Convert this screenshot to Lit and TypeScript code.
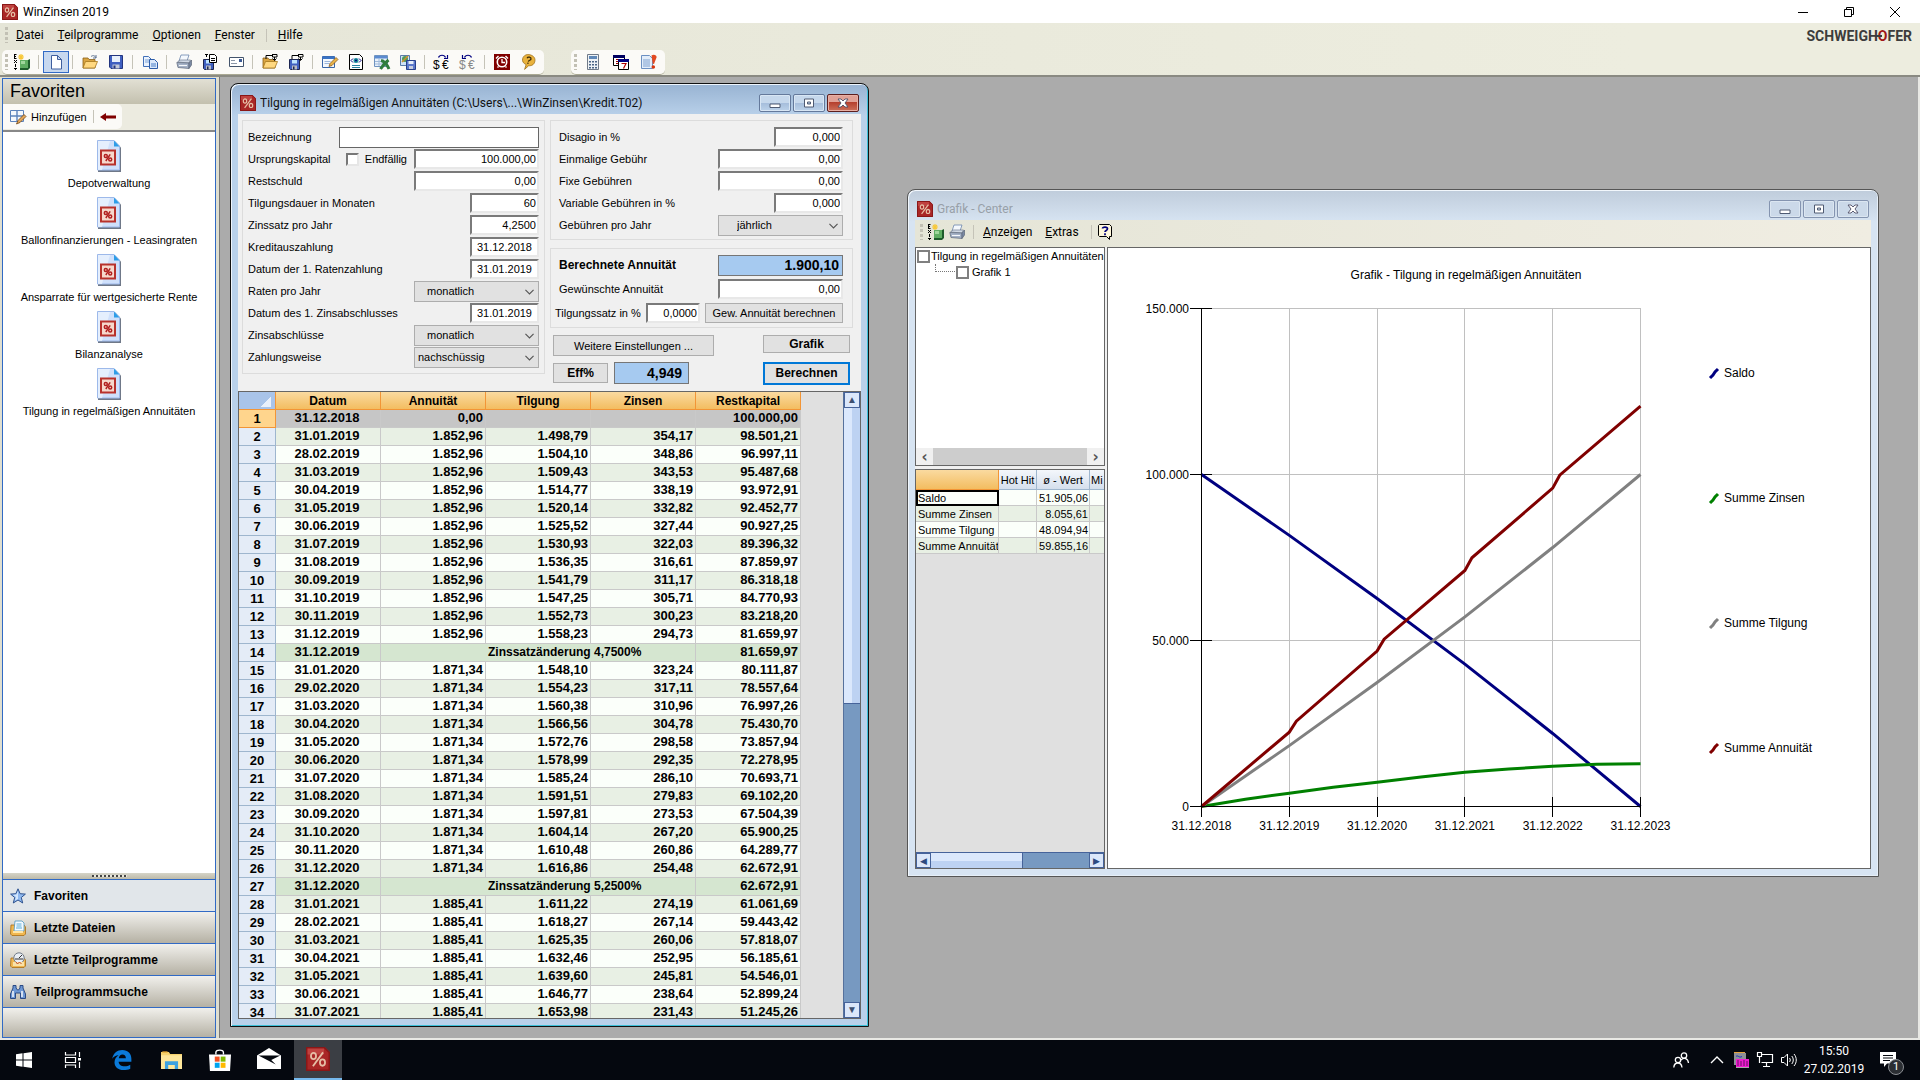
import { LitElement, html, svg, css, nothing, type TemplateResult } from "lit";
import { customElement } from "lit/decorators.js";
import { classMap } from "lit/directives/class-map.js";

/* ---------- icons (16x16 grid) ---------- */

const percent = svg`<g fill="none" stroke="#e6bfa6" stroke-width="1.200"><ellipse cx="5" cy="6" rx="1.700" ry="2.100"/><ellipse cx="11" cy="10.400" rx="1.700" ry="2.100"/><path d="M11.400 3.600 4.600 12.800"/></g>`;

const page = svg`<path d="M3.500 1.500h6l4 4v9.500h-10z" fill="#fff" stroke="#3f5f9e"/><path d="M9.500 1.500v4h4z" fill="#c5d8f2" stroke="#3f5f9e"/>`;
const folder = svg`<path d="M1 4h5l1 1.500h6V14H1z" fill="#d9a441" stroke="#8a6116" stroke-width=".8"/><path d="M3.500 7.500h12L12.800 14H1z" fill="#ffd880" stroke="#a5761c" stroke-width=".8"/>`;
const floppy = svg`<path d="M1.500 1.500h13v13h-11.500l-1.500-1.500z" fill="#3f5fc0" stroke="#23357f"/><path d="M4 2h8v6H4z" fill="#e8f0fb"/><path d="M4.500 10.500h7v4h-7z" fill="#c3c9d6"/><path d="M5.500 11.500h2v3h-2z" fill="#23357f"/>`;
const floppySmall = svg`<path d="M1.500 5.500h10v10h-9l-1-1z" fill="#3f5fc0" stroke="#1d2650"/><path d="M4 6h5v3.500H4z" fill="#bfe4ff"/><path d="M4 11.500h5v4H4z" fill="#b9bcc4"/><path d="M5 12.500h1.500v3H5z" fill="#1d2650"/>`;
const arrowOver = svg`<path d="M4 5V1.500h6M10.500 0v3h4.500V.5h-4.500M12.500 3v3M10.500 4.500l2 2 2-2" fill="none" stroke="#000"/>`;

const ICONS: Record<string, TemplateResult> = {
  app: svg`<path d="M0 0h12.500L16 3.500V16H0z" fill="#a92626"/><path d="M.5.5h11.800l3.200 3.200V15.500H.5z" fill="none" stroke="#8a1717"/><path d="M1 1h11v4H1z" fill="#cf5550" opacity=".6"/>${percent}`,
  exit: svg`<path d="M6 6h8l2-1v9l-2 2H6z" fill="#1e5d2b"/><path d="M6 6h8v8H6z" fill="#5fae62"/><path d="M7 7h4v3H7z" fill="#9fd79b"/><path d="M0 .5h2.500M0 2.500h2M0 4.500h2.500M.5 0v5M0 6.500h1M2 6.500h1M1 7.500h1M0 8.500h1M2 8.500h1M1.500 10v3M0 14.500h3M1.500 14v2" stroke="#000" fill="none"/><path d="M7 0v6M4 3h6M5 1l4 4M9 1 5 5" stroke="#f7c83a" stroke-width="1.200"/>`,
  page,
  folder: svg`${folder}<path d="M9 2.500c2-1.500 4-1 5 1.500m0-3v3h-3" fill="none" stroke="#5d7190"/>`,
  floppy,
  copy: svg`<path d="M1.500 2.500h5l3 3v7h-8z" fill="#eaf2fd" stroke="#4270b8"/><path d="M3 6h4M3 8h4" stroke="#7da3d8"/><path d="M7.500 5.500h5l3 3v6h-8z" fill="#dbe9fb" stroke="#2d5ca8"/><path d="M9 10h5M9 12h5" stroke="#4d80c8"/>`,
  print: svg`<path d="M5 1h8l-2 6H3z" fill="#f4f8fd" stroke="#6d87ad" stroke-width=".8"/><path d="M1.500 8 4 6h10.500L13 9z" fill="#d2dae6" stroke="#707c90" stroke-width=".7"/><path d="M.8 8.500 13 9v5.500L2 13.500z" fill="#a5b2c7" stroke="#5b6678" stroke-width=".7"/><path d="M13 9l2.500-3v5L13 14.500z" fill="#7a89a4" stroke="#5b6678" stroke-width=".7"/><path d="M3 11.500h8" stroke="#f6f8fb"/>`,
  saveDoc: svg`${floppySmall}<path d="M7.500.5h5l2 2v6h-7z" fill="#fff" stroke="#000"/><path d="M3 .5h3M4.500 0v3M9 4.500h4M9 6.500h4" stroke="#000"/>`,
  mail: svg`<path d="M1.500 3.500h14v9h-14z" fill="#fff" stroke="#44546c"/><path d="M3 6.500h4M3 9.500h6" stroke="#8c97a8"/><path d="M11 5h3v3h-3z" fill="#3d5a94"/>`,
  folderOut: svg`${folder}${arrowOver}`,
  saveOut: svg`${floppySmall}${arrowOver}`,
  edit: svg`<path d="M.5 2.500h12v11H.5z" fill="#f4f8fd" stroke="#3a66a8"/><path d="M.5 2.500h12v2.500H.5z" fill="#3a73c4"/><path d="M2.500 7.500h6M2.500 9.500h5" stroke="#9bb6dc"/><path d="M7 12.500 8 9.500l6-6 2 2-6 6z" fill="#e9b44a" stroke="#7b4c12" stroke-width=".7"/>`,
  web: svg`<path d="M1.500.5h10l3 3v12h-13z" fill="#fff" stroke="#000"/><circle cx="8" cy="6.500" r="2.500" fill="#1e8f9c"/><circle cx="8" cy="6.500" r="1" fill="#00007a"/><path d="M5 4.500l-2 2 2 2M11 4.500l2 2-2 2" fill="none" stroke="#00007a"/><path d="M4 11.500h8M4 13.500h8" stroke="#2780a0"/>`,
  excel: svg`<path d="M.5 1.500h13v11H.5z" fill="#e8f1fb" stroke="#6f93c0"/><path d="M1 2h12v2.500H1z" fill="#5b8bd0"/><path d="M1 7.500h12M1 10h12M5 4v8M9 4v8" stroke="#9fb9da"/><path d="M7 6.500c4 1 6 4 8 8.500M14.500 6C12 8 9 11 6.500 15" fill="none" stroke="#2e7d3d" stroke-width="3"/>`,
  picSave: svg`<path d="M.5 1.500h9v10h-9z" fill="#cfe3f7" stroke="#5b7ba8"/><circle cx="5" cy="5" r="3" fill="#4f9a5a"/><path d="M2 8l6-6" stroke="#d08c2a" stroke-width="1.500"/><path d="M6.500 6.500h9v9h-9z" fill="#5b78cc" stroke="#27408c"/><path d="M8.500 7h5v3h-5z" fill="#e6eefa"/><path d="M9 12h4v3H9z" fill="#c8cede"/>`,
  euro: svg`<text x="-1" y="15" font-size="12" font-family="Liberation Sans">$</text><text x="8" y="15" font-size="12" font-family="Liberation Sans">€</text><path d="M4.500 3.500c1-3 6-3 7 0m2-2.500v3.500h-3.500" fill="none" stroke="#000080" stroke-width="1.200"/>`,
  euroBack: svg`<text x="-1" y="15" font-size="12" fill="#888" font-family="Liberation Sans">$</text><text x="8" y="15" font-size="12" fill="#888" font-family="Liberation Sans">€</text><path d="M11.500 3.500c-1-3-6-3-7 0m-2-2.500v3.500h3.500" fill="none" stroke="#000080" stroke-width="1.200"/>`,
  alarm: svg`<path d="M0 0h16v16H0z" fill="#800000"/><circle cx="8" cy="8" r="4.700" fill="none" stroke="#fff" stroke-width="1.600"/><path d="M8 5v3.500h3" fill="none" stroke="#fff" stroke-width="1.300"/><path d="M2 4.500 4.500 2M14 4.500 11.500 2M3.500 13.500l1-1M12.500 13.500l-1-1" stroke="#fff" stroke-width="1.400"/>`,
  help: svg`<g transform="rotate(14 8 8)"><path d="M8 .5c4 0 6.500 2 6.500 5.500S12 11 9.500 11.500L6.500 16l.3-5C3.500 10.500 2 8.500 2 6 2 3 4.500.5 8 .5z" fill="#e9b23c" stroke="#9a6a14" stroke-width=".7"/><path d="M6.200 4.500c.3-2 4-2 4 0 0 1.500-2 1.300-2 3M8.200 8.500v1.300" fill="none" stroke="#3b2a08" stroke-width="1.300"/></g>`,
  calc: svg`<path d="M2.500.5h11v15h-11z" fill="#eef2f6" stroke="#707a88"/><path d="M4 2h8v3H4z" fill="#5f88b8"/><path d="M4 7h2v1.500H4zM7 7h2v1.500H7zM10 7h2v1.500h-2zM4 10h2v1.500H4zM7 10h2v1.500H7zM10 10h2v1.500h-2zM4 13h2v1.500H4zM7 13h2v1.500H7zM10 13h2v1.500h-2z" fill="#4a6486"/>`,
  calendar: svg`<path d="M.5 1.500h11v10H.5z" fill="#fff" stroke="#000"/><path d="M0 1h12v3H0z" fill="#000060"/><path d="M3 5.500h3v4H3M3 7.500h3" fill="none" stroke="#900"/><path d="M5.500 5.500h10v10h-10z" fill="#fff" stroke="#000"/><path d="M5 5h11v3H5z" fill="#000080"/><path d="M8.500 9.500h4.500L10.500 14.500" fill="none" stroke="#b00000" stroke-width="1.200"/>`,
  note: svg`<path d="M.5 1.500h8l3 3v10H.5z" fill="#e2edfa" stroke="#6c90c2"/><path d="M2 6h7M2 8h7M2 10h7M2 12h7" stroke="#7fa0cf"/><path d="M10.500 1.500c2-1.500 5.500-.5 5 2L13 10l-1.200-.2z" fill="#e24a22"/><circle cx="12.300" cy="13" r="1.800" fill="#d8360f"/>`,
  gridEdit: svg`<path d="M.5 1.500h13v11H.5z" fill="#f6f9fd" stroke="#5d84bc"/><path d="M7 1v11M0 7h13" stroke="#5d84bc" stroke-width="1.400"/><path d="M6.500 15 8 11.500l6-6 2 2-6 6z" fill="#e5a85a" stroke="#6f4313" stroke-width=".8"/>`,
  arrowLeft: svg`<path d="M0 8l6-4v2.500h10v3H6V12z" fill="#800000"/>`,
  question: svg`<path d="M2.500.5h10l2 2v10h-2v3l-3-3h-7l-1-1v-10z" fill="#fff8dc" stroke="#000"/><path d="M5.500 4.500c0-2 5-2 5 .3 0 1.800-2.500 1.500-2.500 3.200M8 9.200v2" fill="none" stroke="#00007a" stroke-width="1.700"/>`,
  star: svg`<path d="M8 .8l2.100 4.900 5.300.4-4.100 3.400 1.400 5.500L8 12l-4.700 3 1.400-5.500L.6 6.100l5.300-.4z" fill="#8fb9f0" stroke="#2f538f"/><path d="M8 3v8L5 12.500 6 9 3 7l3.500-.5z" fill="#d3e6fc"/>`,
  files: svg`<path d="M1 5h13l1.500 2v7L14 15.500H2L.5 14z" fill="#f1b850" stroke="#a86d14" stroke-width=".8"/><path d="M5 1h7l2 2v8H4z" fill="#f4faff" stroke="#4d97c2" stroke-width=".8"/><path d="M6.500 4h5M6.500 6h5M6 8h6" stroke="#5bacd6"/><path d="M3 12h10" stroke="#ffe6a8" stroke-width="2"/>`,
  recent: svg`<path d="M1 6h13l1.500 2v6L14 15.500H2L.5 14z" fill="#efb752" stroke="#a86d14" stroke-width=".8"/><circle cx="9" cy="6" r="5.200" fill="#e9eef4" stroke="#737d8a"/><path d="M9 6l3-3M5 7h8" stroke="#333"/><path d="M3 10h11v4H3z" fill="#f9e2a8"/><path d="M6 10l1.500 2 2-2 2 2" fill="none" stroke="#c34b22"/>`,
  binoculars: svg`<path d="M3 1.500h3V4l1.500 2h1L10 4V1.500h3V4l2.500 6v4.500h-5V9h-5v5.500h-5V10L3 4z" fill="#6d97d4" stroke="#2b4a84"/><path d="M3 7v6M12 7v6" stroke="#fff" stroke-width="1.400"/>`,
  people: svg`<g fill="none" stroke="#fff" stroke-width="1.300"><circle cx="11" cy="3.500" r="2.700"/><circle cx="5" cy="8" r="2.700"/><path d="M0.800 15.500c.5-6 7.500-6 8.200 0M8 8c3-3 7-1.500 7.500 3"/></g>`,
  chevron: svg`<path d="M2 11l6-6 6 6" fill="none" stroke="#fff" stroke-width="1.400"/>`,
  trayApp: svg`<path d="M1 1h12v12H1z" fill="#8d8f96"/><path d="M1 .5h11" stroke="#e5a33d"/><path d="M3 4.500c2-2 3 2 6 0" stroke="#1530c0" fill="none"/><path d="M3 7h13v8H3z" fill="#f01ad0"/><path d="M5 8v6M8 9v5M11 8v6M14 9v5" stroke="#641060"/><path d="M3 15.500h13" stroke="#aaa"/>`,
  network: svg`<path d="M4.500 2.500h11v8h-11M9.500 11v3M6 14.500h7M.5.5h4v4h-4zM2.500 5v6" fill="none" stroke="#fff" stroke-width="1.200"/>`,
  sound: svg`<path d="M.5 5.500h2.500L6.500 2v12L3 10.500H.5z" fill="none" stroke="#fff"/><path d="M8.500 6c1 1.200 1 2.800 0 4M10.800 4c2 2.300 2 5.700 0 8M13 2c3 3.500 3 8.500 0 12" fill="none" stroke="#fff"/>`,
  start: svg`<path d="M0 2.200 6.500 1.300v6.200H0zM7.500 1.200 16 0v7.500H7.500zM0 8.500h6.500v6.200L0 13.800zM7.500 8.500H16V16l-8.500-1.200z" fill="#fff"/>`,
  taskview: svg`<path d="M.5 0v3h10V0M.5 16v-3h10v3M.5 5.500h10v5H.5zM14.500 0v5M14.500 10v6" fill="none" stroke="#fff" stroke-width="1.200"/><path d="M13 6h3v2.500h-3z" fill="#fff"/>`,
  edge: svg`<path d="M.2 7C1 2.300 4.200 0 8.200 0c4.600 0 7.300 3 7.300 7v2.300H5.300c.2 2.500 2.200 3.700 4.700 3.700 1.800 0 3.200-.5 4.600-1.300v3.200C13 15.700 11.300 16 9.300 16 4.800 16 2 13.400 2 9.700 2 7.200 3.500 5.300 5.300 4.200 3 4.300 1.400 5.300.2 7zm5.200-.5h5.700c0-1.700-1-2.900-2.700-2.900-1.600 0-2.700 1.200-3 2.900z" fill="#0b7ad9"/>`,
  explorer: svg`<path d="M0 1.500h6l1 1.500h9v11.500H0z" fill="#f7d36f"/><path d="M0 4h16v10.500H0z" fill="#ffe79b"/><path d="M3 8.500h10v6h-2.500v-3h-5v3H3z" fill="#3da2e0"/><path d="M1 1.500h4" stroke="#e2a42e"/>`,
  store: svg`<path d="M0 4h16l-.7 12H.7z" fill="#fff"/><path d="M5 4V2.500C5 .5 10.500 0 10.500 2.500V4" fill="none" stroke="#fff"/><path d="M4.200 5.500h3.500v3.700H4.200z" fill="#f25022"/><path d="M8.500 5.500H12v3.700H8.500z" fill="#7fba00"/><path d="M4.200 10h3.500v3.700H4.200z" fill="#00a4ef"/><path d="M8.500 10H12v3.700H8.500z" fill="#ffb900"/>`,
  mailBig: svg`<path d="M0 5 8 0l8 5v9H0z" fill="#fff"/><path d="M1 5h14.500L9.500 8l3 3L1 5z" fill="#05080f"/>`,
  notify: svg`<path d="M0 0h16v11.500H7L4 15v-3.500H0z" fill="#fff"/><path d="M3 3.500h10M3 6h10M3 8.500h7" stroke="#05080f"/>`,
  winMin: svg`<path d="M3 8.500h10" stroke="#000"/>`,
  winRestore: svg`<path d="M3.500 5.500h7v7h-7zM5.500 5.500v-2h7v7h-2" fill="none" stroke="#000"/>`,
  winClose: svg`<path d="M3 3l10 10M13 3 3 13" stroke="#000"/>`,
  mdiMin: svg`<path d="M3 9h10v3.500H3z" fill="#fff" stroke="#4f5b73"/>`,
  mdiMax: svg`<path d="M3.500 4h9v8h-9zM6.500 7h3v2h-3z" fill="#fff" fill-rule="evenodd" stroke="#4f5b73"/>`,
  mdiClose: svg`<path d="M3 4h3l2 2 2-2h3l-3 4 3 4h-3L8 10l-2 2H3l3-4z" fill="#fff" stroke="#4f4f66" stroke-width=".9"/>`,
  check: svg`<path d="M3 6l5 5 5-5" fill="none" stroke="#555" stroke-width="1.400"/>`,
};

const icon = (name: string, size = 16) =>
  html`<svg class="ico" width=${size} height=${size} viewBox="0 0 16 16" aria-hidden="true">${ICONS[name]}</svg>`;

const docIcon = html`<svg class="ico" width="24" height="32" viewBox="0 0 24 32" aria-hidden="true">
  <path d="M1 1h16.500L24 7.500V32H1z" fill="#6f7888"/>
  <path d="M.5.5h16.500l5.500 5.500V30H.5z" fill="#cfe0fb" stroke="#9db9ea"/>
  <path d="M1 1h12L5 30H1z" fill="#eaf2fe" opacity=".8"/>
  <path d="M17 .5V6.500h5.500z" fill="#2d9de8"/>
  <path d="M4 10.500h14v14H4z" fill="#f6d8cc" stroke="#b8322c" stroke-width="2"/>
  <g fill="none" stroke="#b22020" stroke-width="1.500"><circle cx="8.800" cy="16" r="1.500"/><circle cx="13.200" cy="19.600" r="1.500"/><path d="M13.200 14.300 8.800 21"/></g>
</svg>`;

/* ---------- data ---------- */

const TOOLBAR: (string | null)[] = [
  "exit", null, "page", null, "folder", "floppy", null, "copy", null, "print", "saveDoc", "mail", null,
  "folderOut", "saveOut", null, "edit", "web", "excel", "picSave", null, "euro", "euroBack", null, "alarm", "help",
];
const FAVORITES = [
  "Depotverwaltung",
  "Ballonfinanzierungen - Leasingraten",
  "Ansparrate für wertgesicherte Rente",
  "Bilanzanalyse",
  "Tilgung in regelmäßigen Annuitäten",
];
const NAV = [
  ["star", "Favoriten"],
  ["files", "Letzte Dateien"],
  ["recent", "Letzte Teilprogramme"],
  ["binoculars", "Teilprogrammsuche"],
];
const LOAN_TITLE = "Tilgung in regelmäßigen Annuitäten (C:\\Users\\...\\WinZinsen\\Kredit.T02)";

/* date | annuity | redemption | interest | remaining capital */
const PLAN = `31.12.2018|0,00|||100.000,00
31.01.2019|1.852,96|1.498,79|354,17|98.501,21
28.02.2019|1.852,96|1.504,10|348,86|96.997,11
31.03.2019|1.852,96|1.509,43|343,53|95.487,68
30.04.2019|1.852,96|1.514,77|338,19|93.972,91
31.05.2019|1.852,96|1.520,14|332,82|92.452,77
30.06.2019|1.852,96|1.525,52|327,44|90.927,25
31.07.2019|1.852,96|1.530,93|322,03|89.396,32
31.08.2019|1.852,96|1.536,35|316,61|87.859,97
30.09.2019|1.852,96|1.541,79|311,17|86.318,18
31.10.2019|1.852,96|1.547,25|305,71|84.770,93
30.11.2019|1.852,96|1.552,73|300,23|83.218,20
31.12.2019|1.852,96|1.558,23|294,73|81.659,97
31.12.2019|Zinssatzänderung 4,7500%|81.659,97
31.01.2020|1.871,34|1.548,10|323,24|80.111,87
29.02.2020|1.871,34|1.554,23|317,11|78.557,64
31.03.2020|1.871,34|1.560,38|310,96|76.997,26
30.04.2020|1.871,34|1.566,56|304,78|75.430,70
31.05.2020|1.871,34|1.572,76|298,58|73.857,94
30.06.2020|1.871,34|1.578,99|292,35|72.278,95
31.07.2020|1.871,34|1.585,24|286,10|70.693,71
31.08.2020|1.871,34|1.591,51|279,83|69.102,20
30.09.2020|1.871,34|1.597,81|273,53|67.504,39
31.10.2020|1.871,34|1.604,14|267,20|65.900,25
30.11.2020|1.871,34|1.610,48|260,86|64.289,77
31.12.2020|1.871,34|1.616,86|254,48|62.672,91
31.12.2020|Zinssatzänderung 5,2500%|62.672,91
31.01.2021|1.885,41|1.611,22|274,19|61.061,69
28.02.2021|1.885,41|1.618,27|267,14|59.443,42
31.03.2021|1.885,41|1.625,35|260,06|57.818,07
30.04.2021|1.885,41|1.632,46|252,95|56.185,61
31.05.2021|1.885,41|1.639,60|245,81|54.546,01
30.06.2021|1.885,41|1.646,77|238,64|52.899,24
31.07.2021|1.885,41|1.653,98|231,43|51.245,26`.split("\n").map((r) => r.split("|"));

const STATS = [
  ["Saldo", "51.905,06"],
  ["Summe Zinsen", "8.055,61"],
  ["Summe Tilgung", "48.094,94"],
  ["Summe Annuität", "59.855,16"],
];

/* series points: [years since start, thousands] */
const SERIES = [
  { name: "Saldo", color: "#000080", pts: [[0, 100], [1, 81.66], [2, 62.67], [3, 42.9], [4, 22], [5, 0]] },
  { name: "Summe Zinsen", color: "#008000", pts: [[0, 0], [0.5, 2.2], [1, 4], [1.5, 5.8], [2, 7.3], [2.5, 8.9], [3, 10.3], [3.5, 11.3], [4, 12.1], [4.5, 12.7], [5, 12.9]] },
  { name: "Summe Tilgung", color: "#808080", pts: [[0, 0], [1, 18.34], [2, 37.33], [3, 57.1], [4, 78], [5, 100]] },
  { name: "Summe Annuität", color: "#800000", pts: [[0, 0], [1, 22.4], [1.08, 25.7], [2, 46.8], [2.08, 50.4], [3, 71.1], [3.08, 74.9], [4, 95.9], [4.08, 99.8], [5, 120.6]] },
];

/* ---------- shared styles ---------- */

const base = css`
  * { box-sizing: border-box; }
  button, input, select { font: inherit; color: inherit; margin: 0; }
  button { padding: 0; border: 0; background: none; }
  .ico { display: block; flex: none; overflow: visible; }
  .grip {
    width: 3px; height: 16px; flex: none;
    background: repeating-linear-gradient(#c2c0b4 0 3px, transparent 3px 5px);
  }
  .sep { width: 1px; flex: none; background: #c5c3b8; }
  .u::first-letter { text-decoration: underline; }
`;

/* ---------- MDI child window frame ---------- */

@customElement("mdi-window")
export class MdiWindow extends LitElement {
  static properties = { heading: {}, inactive: { type: Boolean, reflect: true } };
  declare heading: string;
  declare inactive: boolean;

  static styles = [base, css`
    :host {
      display: flex; flex-direction: column; padding: 0 7px 7px;
      border: 1px solid #111; border-radius: 8px 8px 0 0;
      background: linear-gradient(#98b3d2, #b9d1ea 32px);
      box-shadow: inset 1px 1px #eef5fc, inset -1px -1px #3cc0d8;
    }
    :host([inactive]) {
      border-color: #555; background: linear-gradient(#bfccdb, #d7e4f2 32px);
      box-shadow: inset 1px 1px #f2f7fc, inset -1px -1px #e6eff8;
    }
    .bar {
      display: flex; align-items: center; gap: 4px; height: 30px; flex: none; padding: 8px 2px 0;
      font: 12px/20px Roboto, "Noto Sans", sans-serif; color: #111;
    }
    :host([inactive]) .bar { color: #98a0a8; }
    .name { flex: 1; white-space: nowrap; overflow: hidden; }
    .btns { display: flex; gap: 2px; }
    .btn {
      display: grid; place-items: center; width: 32px; height: 18px; border: 1px solid #64799b;
      border-radius: 2px; background: linear-gradient(#c6d8ec 50%, #a5bddb 50%, #bcd2ea);
      box-shadow: inset 0 0 0 1px #d8e6f4;
    }
    .close { background: linear-gradient(#e0a196 45%, #b53f2d 45%, #cc705a); border-color: #5c1f1f; box-shadow: inset 0 0 0 1px #e8b0a5; }
    :host([inactive]) .btn { background: #cbd9e9; border-color: #8494b0; box-shadow: inset 0 0 0 1px #dbe6f1; }
    .body { flex: 1; min-height: 0; display: flex; flex-direction: column; background: #f0f0f0; }
  `];

  render() {
    return html`
      <div class="bar">
        ${icon("app")}<span class="name">${this.heading}</span>
        <span class="btns">
          <button class="btn" aria-label="Minimieren">${icon("mdiMin")}</button>
          <button class="btn" aria-label="Maximieren">${icon("mdiMax")}</button>
          <button class="btn close" aria-label="Schließen">${icon("mdiClose")}</button>
        </span>
      </div>
      <div class="body"><slot></slot></div>`;
  }
}

/* ---------- loan calculation form and plan ---------- */

@customElement("loan-view")
export class LoanView extends LitElement {
  static styles = [base, css`
    :host { display: flex; flex-direction: column; flex: 1; min-height: 0; font: 11px/16px "Liberation Sans", Arial, sans-serif; color: #000; }
    .form { display: grid; grid-template-columns: repeat(2, minmax(0, 1fr)); gap: 5px; padding: 6px 8px 7px 4px; align-items: start; }
    .col { display: flex; flex-direction: column; gap: 8px; }
    .group { border: 1px solid #dcdcdc; padding: 5px; }
    .col .group { padding: 5px 9px 3px 4px; display: flex; flex-direction: column; }
    .calc { gap: 2px; }
    .row { display: flex; align-items: center; height: 22px; gap: 7px; white-space: nowrap; }
    .row label { flex: 1; }
    .col .row label { padding-left: 4px; }
    .tight { gap: 5px; }
    .col .tight label { padding-left: 0; }
    .row .opt { display: flex; align-items: center; gap: 6px; flex: none; }
    .opt input { width: 13px; height: 13px; appearance: none; background: #fff; border: 2px solid; border-color: #777 #e6e6e6 #e6e6e6 #777; }
    .in {
      height: 20px; width: 125px; padding: 0 1px; text-align: right; background: #fff; border-radius: 0;
      border: 2px solid; border-color: #7a7a7a #e8e8e8 #e8e8e8 #7a7a7a; outline: 0;
    }
    .w2 { width: 69px; }
    .w3 { width: 54px; }
    .date { padding-right: 5px; }
    .name { width: 200px; height: 21px; border: 1px solid #666; }
    .sel { position: relative; display: flex; align-items: center; width: 125px; height: 21px; }
    .sel select { appearance: none; width: 100%; height: 100%; border: 1px solid #adadad; border-radius: 0; background: #e1e1e1; padding: 0 12px; }
    .sel .left { padding: 0 3px; }
    .sel .mid { padding: 0 18px; }
    .sel .ico { position: absolute; right: 3px; }
    .bold { font-weight: 700; font-size: 12px; }
    .result { border: 1px solid #767676; background: #a6caf0; font-weight: 700; font-size: 14px; text-align: right; padding: 0 3px; height: 21px; width: 125px; }
    .btn { border: 1px solid #adadad; background: #e1e1e1; height: 20px; }
    .wish { width: 138px; }
    .more { width: 161px; height: 21px; }
    .act { width: 87px; height: 18px; }
    .eff { width: 55px; }
    .rate { width: 75px; padding-right: 6px; height: 22px; }
    .primary { border: 2px solid #0078d7; height: 23px; }
    .actions { display: flex; flex-direction: column; gap: 5px; padding: 0 3px; margin-top: -1px; }
    .line { display: flex; align-items: center; gap: 6px; height: 22px; }
    .upper { align-items: flex-start; }
    .push { margin-left: auto; }

    .grid { display: flex; flex: 1; min-height: 0; border: 1px solid #666; background: #e0e0e0; }
    .clip { flex: 1; overflow: hidden; }
    table { border-collapse: separate; border-spacing: 0; table-layout: fixed; width: 562px; font-weight: 700; font-size: 13px; }
    .cn { width: 37px; }
    th, td { height: 18px; padding: 0 2px 1px 0; line-height: 16px; border-right: 1px solid #c9c9c9; border-bottom: 1px solid #c9c9c9; overflow: hidden; white-space: nowrap; }
    thead th { background: linear-gradient(#fadaa0, #f3bd60); border-color: #f29536; font-size: 12px; padding: 0; }
    thead .corner { background: linear-gradient(135deg, transparent 50%, #e9f0fa 50%) 22px 5px / 10px 10px no-repeat, #a9c4e9; }
    tbody th { background: #e4ecf7; border-color: #9eb6ce; padding: 0; }
    td { text-align: right; background: #fbfffa; }
    .d { text-align: center; }
    tbody tr:nth-child(even) td { background: #e8f0e4; }
    tbody tr.change td { background: #d5e6d0; }
    tbody tr .msg { font-size: 12px; text-align: left; padding-left: 107px; }
    tbody tr.cur td { background: #c6c6c6; }
    tbody tr.cur th { background: #ffd58d; border-color: #f29536; }
    .sb { width: 17px; flex: none; display: flex; flex-direction: column; background: #7799c1; border-left: 1px solid #56719c; }
    .sb button { height: 16px; background: #dbe7fa; border: 1px solid #46639a; color: #3d5070; font-size: 10px; line-height: 14px; }
    .thumb { height: 296px; background: linear-gradient(90deg, #dbe8fc 50%, #bdd2f2 50%); border-bottom: 1px solid #46639a; }
    .fill { flex: 1; }
  `];

  private field(id: string, label: string, value: string, cls = "") {
    return html`<div class="row"><label for=${id}>${label}</label><input id=${id} class="in ${cls}" .value=${value}></div>`;
  }

  private choice(id: string, label: string, value: string, cls = "") {
    return html`<div class="row"><label for=${id}>${label}</label>
      <span class="sel"><select id=${id} class=${cls}><option>${value}</option></select>${icon("check", 13)}</span></div>`;
  }

  private planRow(r: string[], i: number) {
    const change = r.length === 3;
    return html`<tr class=${classMap({ cur: i === 0, change })}>
      <th scope="row">${i + 1}</th><td class="d">${r[0]}</td>
      ${change
        ? html`<td class="msg" colspan="3">${r[1]}</td><td>${r[2]}</td>`
        : r.slice(1).map((v) => html`<td>${v}</td>`)}
    </tr>`;
  }

  render() {
    return html`
      <div class="form">
        <div class="group">
          ${this.field("bez", "Bezeichnung", "", "name")}
          <div class="row">
            <label for="kap">Ursprungskapital</label>
            <label class="opt"><input type="checkbox">Endfällig</label>
            <input id="kap" class="in" .value=${"100.000,00"}>
          </div>
          ${this.field("rest", "Restschuld", "0,00")}
          ${this.field("dauer", "Tilgungsdauer in Monaten", "60", "w2")}
          ${this.field("zins", "Zinssatz pro Jahr", "4,2500", "w2")}
          ${this.field("ausz", "Kreditauszahlung", "31.12.2018", "w2 date")}
          ${this.field("rate1", "Datum der 1. Ratenzahlung", "31.01.2019", "w2 date")}
          ${this.choice("raten", "Raten pro Jahr", "monatlich")}
          ${this.field("abs1", "Datum des 1. Zinsabschlusses", "31.01.2019", "w2 date")}
          ${this.choice("abs", "Zinsabschlüsse", "monatlich")}
          ${this.choice("zw", "Zahlungsweise", "nachschüssig", "left")}
        </div>
        <div class="col">
          <div class="group">
            ${this.field("dis", "Disagio in %", "0,000", "w2")}
            ${this.field("einm", "Einmalige Gebühr", "0,00")}
            ${this.field("fix", "Fixe Gebühren", "0,00")}
            ${this.field("var", "Variable Gebühren in %", "0,000", "w2")}
            ${this.choice("gpj", "Gebühren pro Jahr", "jährlich", "mid")}
          </div>
          <div class="group calc">
            <div class="row"><label class="bold" for="ann">Berechnete Annuität</label><input id="ann" class="result" readonly .value=${"1.900,10"}></div>
            ${this.field("wunsch", "Gewünschte Annuität", "0,00")}
            <div class="row tight">
              <label for="satz">Tilgungssatz in %</label>
              <input id="satz" class="in w3" .value=${"0,0000"}>
              <button class="btn wish">Gew. Annuität berechnen</button>
            </div>
          </div>
          <div class="actions">
            <div class="line upper"><button class="btn more">Weitere Einstellungen ...</button><button class="btn act bold push">Grafik</button></div>
            <div class="line">
              <button class="btn eff bold">Eff%</button>
              <input class="result rate" aria-label="Effektivzinssatz" readonly .value=${"4,949"}>
              <button class="btn act bold primary push">Berechnen</button>
            </div>
          </div>
        </div>
      </div>
      <div class="grid">
        <div class="clip">
          <table>
            <colgroup><col class="cn"><col><col><col><col><col></colgroup>
            <thead><tr><th class="corner"></th>${["Datum", "Annuität", "Tilgung", "Zinsen", "Restkapital"].map((h) => html`<th scope="col">${h}</th>`)}</tr></thead>
            <tbody>${PLAN.map((r, i) => this.planRow(r, i))}</tbody>
          </table>
        </div>
        <div class="sb"><button aria-label="Nach oben">▲</button><div class="thumb"></div><div class="fill"></div><button aria-label="Nach unten">▼</button></div>
      </div>`;
  }
}

/* ---------- chart window content ---------- */

@customElement("chart-view")
export class ChartView extends LitElement {
  static styles = [base, css`
    :host { display: flex; flex-direction: column; flex: 1; min-height: 0; font: 11px/16px "Liberation Sans", Arial, sans-serif; color: #000; }
    .tools { display: flex; align-items: center; height: 27px; flex: none; padding: 0 5px 3px; gap: 5px; background: linear-gradient(90deg, #e5e5d7, #f0ede2); font: 12px/16px Roboto, "Noto Sans", sans-serif; }
    .tools .sep { height: 14px; margin-left: 3px; }
    .tools .word { margin: 0 4px; }
    .split { flex: 1; min-height: 0; display: grid; grid-template-columns: 190px 1fr; gap: 2px; }
    .left { display: flex; flex-direction: column; gap: 3px; min-height: 0; }
    .pane { border: 1px solid #666; background: #fff; overflow: hidden; min-width: 0; min-height: 0; }
    .tree { height: 219px; flex: none; display: flex; flex-direction: column; }
    .nodes { flex: 1; overflow: hidden; white-space: nowrap; }
    .nodes label { display: flex; align-items: center; gap: 1px; height: 16px; padding-left: 1px; }
    .nodes input { appearance: none; width: 13px; height: 13px; border: 2px solid #808080; background: #fff; margin: 0; flex: none; }
    .child { display: flex; padding-left: 19px; }
    .child .twig { width: 20px; height: 8px; border: dotted #777; border-width: 0 0 1px 1px; }
    .child label { gap: 3px; }
    .hs { display: flex; height: 17px; background: #f0f0f0; flex: none; }
    .hs button { width: 17px; color: #555; font: 700 15px/14px "DejaVu Sans", sans-serif; }
    .hs .bar { flex: 1; background: #cdcdcd; }
    .stats { flex: 1; display: flex; flex-direction: column; background: #e0e0e0; }
    .fill { flex: 1; }
    table { border-collapse: separate; border-spacing: 0; table-layout: fixed; width: 210px; }
    .c1 { width: 83px; } .c2 { width: 38px; } .c3 { width: 53px; } .c4 { width: 36px; }
    th, td { height: 16px; line-height: 14px; padding: 0 1px; border-right: 1px solid #c9c9c9; border-bottom: 1px solid #c9c9c9; white-space: nowrap; overflow: hidden; font-weight: 400; }
    thead th { height: 20px; background: linear-gradient(#f4f7fb, #d5dfed); border-color: #9eb6ce; }
    thead .corner { background: linear-gradient(#fadaa0, #f3bd60); border-color: #f29536; }
    thead .cut { text-align: left; }
    tbody th { text-align: left; padding: 0 0 0 2px; }
    td { text-align: right; }
    tbody tr:nth-child(odd) > * { background: #fbfffa; }
    tbody tr:nth-child(even) > * { background: #e8f0e4; }
    tbody tr:first-child th { outline: 2px solid #000; outline-offset: -2px; }
    .hb { display: flex; height: 16px; background: #7799c1; border-top: 1px solid #46639a; flex: none; }
    .hb button { width: 15px; background: #dbe7fa; border: 1px solid #46639a; color: #2d4a80; font-size: 9px; line-height: 12px; }
    .hb .thumb { width: 92px; background: linear-gradient(#dbe8fc 50%, #bdd2f2 50%); border-right: 1px solid #46639a; }
    .chart { display: block; width: 100%; height: 100%; font-size: 12px; }
    .grid { stroke: #c0c0c0; stroke-width: 1; shape-rendering: crispEdges; fill: none; }
    .axis { stroke: #000; stroke-width: 1; shape-rendering: crispEdges; fill: none; }
    .ser { fill: none; stroke-width: 3; }
    .mid { text-anchor: middle; } .end { text-anchor: end; }
  `];

  private chart() {
    const x = (year: number) => 95.5 + year * 87.8;
    const y = (k: number) => 558.5 - k * 3.32;
    const years = [0, 1, 2, 3, 4, 5];
    return html`<svg class="chart" viewBox="2 0 762 620" preserveAspectRatio="xMaxYMid meet" role="img" aria-label="Grafik - Tilgung in regelmäßigen Annuitäten">
      <text class="mid" x="360" y="31">Grafik - Tilgung in regelmäßigen Annuitäten</text>
      ${years.slice(1).map((n) => svg`<path class="grid" d="M${x(n)} ${y(150)}V${y(0)}"/>`)}
      ${[50, 100, 150].map((k) => svg`<path class="grid" d="M${x(0)} ${y(k)}H${x(5)}"/><path class="axis" d="M84 ${y(k)}h22"/>`)}
      ${SERIES.map((s) => svg`<polyline class="ser" stroke=${s.color} points=${s.pts.map(([a, b]) => `${x(a)},${y(b)}`).join(" ")}/>`)}
      <path class="axis" d="M${x(0)} ${y(150)}V${y(0) + 10}M84 ${y(0)}H${x(5)}"/>
      ${years.map((n) => svg`${n ? svg`<path class="axis" d="M${x(n)} ${y(0) - 10}v20"/>` : nothing}<text class="mid" x=${x(n)} y="582">31.12.${2018 + n}</text>`)}
      ${[0, 50, 100, 150].map((k) => svg`<text class="end" x="83" y=${y(k) + 4}>${k ? `${k}.000` : "0"}</text>`)}
      ${SERIES.map((s, i) => svg`<path class="ser" stroke=${s.color} d="M604 ${130 + i * 125}l3-3 2-3 3-3"/><text x="618" y=${129 + i * 125}>${s.name}</text>`)}
    </svg>`;
  }

  render() {
    return html`
      <div class="tools">
        <span class="grip"></span>
        <button aria-label="Beenden">${icon("exit")}</button><button aria-label="Drucken">${icon("print")}</button>
        <span class="sep"></span>
        <button class="word u">Anzeigen</button><button class="word u">Extras</button>
        <span class="sep"></span>
        <button aria-label="Hilfe">${icon("question")}</button>
      </div>
      <div class="split">
        <div class="left">
          <div class="pane tree">
            <div class="nodes">
              <label><input type="checkbox">Tilgung in regelmäßigen Annuitäten</label>
              <div class="child"><span class="twig"></span><label><input type="checkbox">Grafik 1</label></div>
            </div>
            <div class="hs"><button aria-label="Nach links">‹</button><span class="bar"></span><button aria-label="Nach rechts">›</button></div>
          </div>
          <div class="pane stats">
            <table>
              <colgroup><col class="c1"><col class="c2"><col class="c3"><col class="c4"></colgroup>
              <thead><tr><th class="corner"></th><th scope="col">Hot Hit</th><th scope="col">ø - Wert</th><th scope="col" class="cut">Mi</th></tr></thead>
              <tbody>${STATS.map(([n, v]) => html`<tr><th scope="row">${n}</th><td></td><td>${v}</td><td></td></tr>`)}</tbody>
            </table>
            <div class="fill"></div>
            <div class="hb"><button aria-label="Nach links">◀</button><span class="thumb"></span><span class="fill"></span><button aria-label="Nach rechts">▶</button></div>
          </div>
        </div>
        <div class="pane">${this.chart()}</div>
      </div>`;
  }
}

/* ---------- application shell ---------- */

@customElement("app-root")
export class AppRoot extends LitElement {
  static styles = [base, css`
    :host { display: flex; flex-direction: column; height: 100vh; overflow: hidden; background: #fff; color: #000; font: 12px/16px Roboto, "Noto Sans", sans-serif; }
    .title { display: flex; align-items: center; gap: 5px; height: 23px; padding: 0 17px 0 2px; flex: none; }
    .title .ctl { margin-left: auto; display: flex; gap: 30px; }

    .top { display: flex; justify-content: space-between; height: 54px; flex: none; padding: 0 8px 0 2px; background: linear-gradient(90deg, #e5e5d7, #ededdf 85%); border-bottom: 2px solid #8a8a82; }
    .menu { display: flex; align-items: center; height: 24px; gap: 14px; padding-left: 3px; }
    .menu .grip { margin-right: -6px; }
    .menu .sep { height: 13px; margin: 0 -3px; }
    .bars { display: flex; gap: 27px; padding-top: 3px; }
    .tb { display: flex; align-items: center; height: 25px; padding: 0 3px; background: #fbfaf7; border-radius: 5px; border-bottom: 1px solid #a9a892; }
    .tb .grip { margin-right: 1px; }
    .t { width: 26px; height: 22px; display: grid; place-items: center; }
    .on { background: #c7d8ef; border: 1px solid #316ac5; }
    .tb .sep { height: 14px; margin: 0 4px 0 3px; }
    .tb.second { gap: 2px; }
    .brand { padding-top: 5px; font: 700 14px/16px Roboto, sans-serif; color: #3c3c3c; }
    .brand .o { position: relative; color: #a01818; }
    .brand .o::before { content: ""; position: absolute; left: -2px; top: 7px; width: 6px; height: 2px; background: #3c3c3c; }

    .main { flex: 1; min-height: 0; display: flex; border-bottom: 2px solid #e8e8e4; }
    .side { width: 220px; flex: none; display: flex; flex-direction: column; padding: 1px 3px 0 2px; background: #e0dfd0; border-right: 1px solid #777; font: 11px/16px "Liberation Sans", Arial, sans-serif; }
    .box { flex: 1; min-height: 0; display: flex; flex-direction: column; border: 1px solid #316ac5; }
    .head { height: 25px; margin: 0; padding: 0 7px; font-weight: 400; font-size: 18px; line-height: 24px; background: linear-gradient(#e2e0d4, #c3c0ae); }
    .add { height: 28px; padding-bottom: 1px; background: #ecebe0; border-bottom: 2px solid #888; display: flex; }
    .addbar { display: flex; align-items: center; gap: 6px; width: 119px; padding: 0 5px 0 7px; background: #fbfaf7; border-radius: 0 5px 5px 0; }
    .add button { display: flex; align-items: center; gap: 5px; }
    .add .sep { height: 13px; }
    .favs { flex: 1; background: #fff; display: flex; flex-direction: column; gap: 6px; padding-top: 8px; align-items: center; }
    .fav { display: flex; flex-direction: column; align-items: center; gap: 3px; white-space: nowrap; color: #000; text-decoration: none; }
    .splitter { height: 6px; background: linear-gradient(#d6d4c8, #bdbaa9); display: grid; place-items: center; }
    .splitter::before { content: ""; width: 35px; height: 2px; background: repeating-linear-gradient(90deg, #444 0 2px, #e8e6dc 2px 4px); }
    .nav { display: flex; align-items: center; gap: 8px; height: 32px; padding: 0 7px; border-top: 1px solid #316ac5; background: linear-gradient(#f1f0ec, #b5b1a4); font: 700 12px/16px "Liberation Sans", Arial, sans-serif; }
    .nav.sel { background: #e1e6ea; }
    .rest { height: 30px; }
    .mdi { position: relative; flex: 1; min-width: 0; overflow: hidden; background: #ababab; border-right: 2px solid #e8e8e4; }
    .w1 { position: absolute; left: 10px; top: 6px; width: 639px; height: 944px; }
    .w2 { position: absolute; left: 687px; top: 112px; width: 972px; height: 688px; }

    .task { display: flex; align-items: center; height: 40px; flex: none; background: #05080f; color: #fff; padding-right: 24px; }
    .apps { display: flex; gap: 1px; height: 100%; }
    .app { width: 48px; display: grid; place-items: center; }
    .live { background: #3b3e44; border-bottom: 2px solid #76b9ed; }
    .tray { margin-left: auto; display: flex; align-items: center; gap: 8px; }
    .tray .first { margin-right: 12px; }
    .clock { text-align: center; line-height: 18px; width: 58px; margin: 0 9px 0 0; white-space: nowrap; display: grid; justify-content: center; }
    .note { position: relative; }
    .badge { position: absolute; left: 8px; top: 7px; width: 16px; height: 16px; border-radius: 8px; background: #2b2e33; border: 1px solid #8b8e93; font-size: 11px; line-height: 14px; text-align: center; }
  `];

  private tool = (name: string | null) =>
    name === null
      ? html`<span class="sep"></span>`
      : html`<button class=${classMap({ t: true, on: name === "page" })} aria-label=${name}>${icon(name)}</button>`;

  render() {
    return html`
      <header class="title">
        ${icon("app")}<span>WinZinsen 2019</span>
        <span class="ctl">
          <button aria-label="Minimieren">${icon("winMin")}</button>
          <button aria-label="Wiederherstellen">${icon("winRestore")}</button>
          <button aria-label="Schließen">${icon("winClose")}</button>
        </span>
      </header>
      <div class="top">
        <div>
          <nav class="menu">
            <span class="grip"></span>
            ${["Datei", "Teilprogramme", "Optionen", "Fenster"].map((m) => html`<button class="u">${m}</button>`)}
            <span class="sep"></span><button class="u">Hilfe</button>
          </nav>
          <div class="bars">
            <div class="tb"><span class="grip"></span>${TOOLBAR.map(this.tool)}</div>
            <div class="tb second"><span class="grip"></span>${["calc", "calendar", "note"].map(this.tool)}</div>
          </div>
        </div>
        <div class="brand">SCHWEIGH<span class="o">O</span>FER</div>
      </div>
      <div class="main">
        <aside class="side">
          <div class="box">
            <h2 class="head">Favoriten</h2>
            <div class="add"><div class="addbar">
              <button>${icon("gridEdit")}Hinzufügen</button><span class="sep"></span>
              <button aria-label="Zurück">${icon("arrowLeft")}</button>
            </div></div>
            <div class="favs">${FAVORITES.map((f) => html`<a class="fav" href="#">${docIcon}<span>${f}</span></a>`)}</div>
            <div class="splitter"></div>
            ${NAV.map(([i, n], k) => html`<button class=${classMap({ nav: true, sel: k === 0 })}>${icon(i)}${n}</button>`)}
            <div class="nav rest"></div>
          </div>
        </aside>
        <main class="mdi">
          <mdi-window class="w1" .heading=${LOAN_TITLE}><loan-view></loan-view></mdi-window>
          <mdi-window class="w2" inactive heading="Grafik - Center"><chart-view></chart-view></mdi-window>
        </main>
      </div>
      <footer class="task">
        <div class="apps">
          <button class="app" aria-label="Start">${icon("start")}</button>
          <button class="app" aria-label="Taskansicht">${icon("taskview")}</button>
          <button class="app" aria-label="Edge">${icon("edge", 20)}</button>
          <button class="app" aria-label="Explorer">${icon("explorer", 21)}</button>
          <button class="app" aria-label="Store">${icon("store", 22)}</button>
          <button class="app" aria-label="Mail">${icon("mailBig", 24)}</button>
          <button class="app live" aria-label="WinZinsen">${icon("app", 24)}</button>
        </div>
        <div class="tray">
          <span class="first">${icon("people")}</span>${icon("chevron")}${icon("trayApp")}${icon("network")}${icon("sound")}
          <div class="clock"><span>15:50</span><span>27.02.2019</span></div>
          <button class="note" aria-label="Benachrichtigungen">${icon("notify")}<span class="badge">1</span></button>
        </div>
      </footer>`;
  }
}
